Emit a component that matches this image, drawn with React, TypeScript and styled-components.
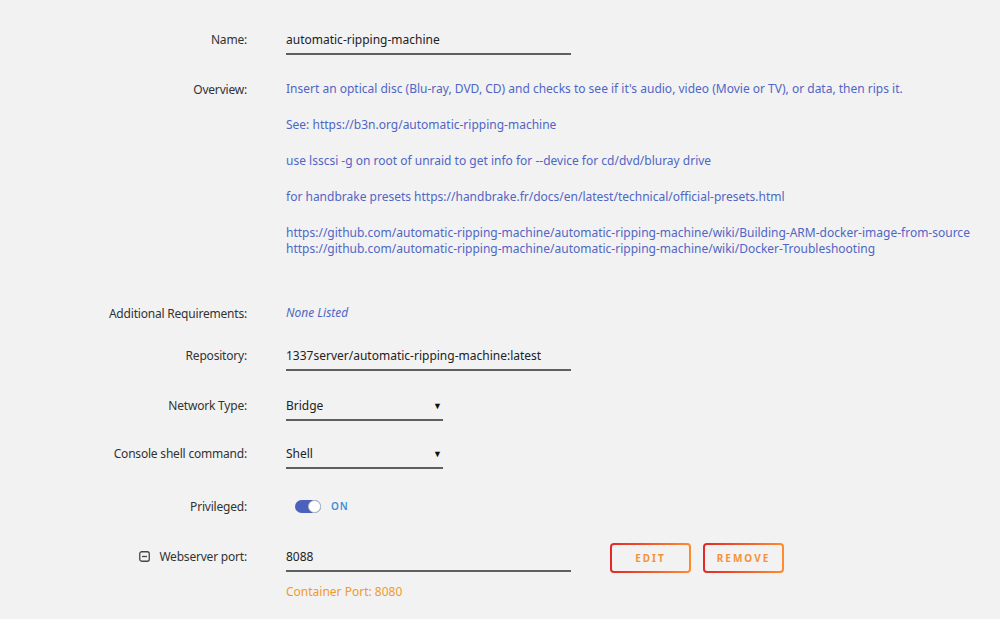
import React from "react";
import styled, { createGlobalStyle } from "styled-components";

const Global = createGlobalStyle`
  html, body { margin: 0; padding: 0; background: #f2f2f2; }
  body { font-family: "Noto Sans", "Open Sans", sans-serif; font-size: 12px; color: #222; }
`;

const Page = styled.div`
  width: 1000px;
  height: 619px;
  overflow: hidden;
  background: #f2f2f2;
  padding-top: 28px;
  box-sizing: border-box;
`;

const Field = styled.div<{ $mt?: number }>`
  display: grid;
  grid-template-columns: 247px 1fr;
  column-gap: 39px;
  align-items: start;
  margin-top: ${(p) => p.$mt ?? 0}px;
`;

const Label = styled.div<{ $h?: number }>`
  display: flex;
  justify-content: flex-end;
  align-items: center;
  gap: 9px;
  height: ${(p) => p.$h ?? 16}px;
  color: #333;
  font-size: 12px;
  letter-spacing: -0.2px;
  white-space: nowrap;
`;

const Value = styled.div`
  display: flex;
  flex-direction: column;
`;

const ValueRow = styled.div`
  display: flex;
  align-items: flex-start;
`;

const Input = styled.div<{ $w: number }>`
  width: ${(p) => p.$w}px;
  height: 27px;
  box-sizing: border-box;
  border-bottom: 2px solid #5f5f5f;
  padding-bottom: 2px;
  display: flex;
  align-items: center;
  justify-content: space-between;
  color: #222;
  font-size: 12px;
  line-height: 16px;
`;

const Caret = styled.span`
  font-size: 9px;
  color: #111;
  margin-right: 1px;
`;

const Overview = styled.div`
  color: #5066c4;
  font-size: 12px;
  line-height: 16px;
  display: flex;
  flex-direction: column;
  gap: 20px;
`;

const Para = styled.div`
  white-space: nowrap;
`;

const Plain = styled.div<{ $italic?: boolean }>`
  color: #5066c4;
  font-style: ${(p) => (p.$italic ? "italic" : "normal")};
  font-size: 12px;
  height: 16px;
  line-height: 16px;
`;

const Toggle = styled.div`
  display: flex;
  align-items: center;
  gap: 10px;
  height: 16px;
  padding-left: 9px;
`;

const Track = styled.div`
  position: relative;
  width: 26px;
  height: 13px;
  border-radius: 7px;
  background: #4c61bd;
  box-sizing: border-box;
`;

const Knob = styled.div`
  position: absolute;
  right: 0;
  top: 0;
  width: 13px;
  height: 13px;
  border-radius: 50%;
  background: #fff;
  box-sizing: border-box;
  border: 1px solid #bdbdbd;
`;

const OnText = styled.span`
  color: #3c8fd6;
  font-size: 10px;
  font-weight: 600;
  letter-spacing: 1px;
`;

const Button = styled.button<{ $w: number }>`
  width: ${(p) => p.$w}px;
  height: 30px;
  box-sizing: border-box;
  border: 2px solid transparent;
  border-radius: 4px;
  background:
    linear-gradient(#f2f2f2, #f2f2f2) padding-box,
    linear-gradient(90deg, #e22828, #ff8c2f) border-box;
  font-family: "Noto Sans", sans-serif;
  font-size: 10px;
  font-weight: 700;
  letter-spacing: 2px;
  color: #f5913a;
  padding: 0;
  margin-top: -2px;
  cursor: pointer;
`;

const Buttons = styled.div`
  display: flex;
  gap: 12px;
  margin-left: 39px;
`;

const Hint = styled.div`
  color: #f09a2a;
  font-size: 12px;
  line-height: 16px;
  margin-top: 11px;
`;

const CollapseIcon = () => (
  <svg width="11" height="11" viewBox="0 0 11 11">
    <rect x="0.75" y="0.75" width="9.5" height="9.5" rx="2" fill="none" stroke="#444" strokeWidth="1.3" />
    <line x1="3" y1="5.5" x2="8" y2="5.5" stroke="#444" strokeWidth="1.3" />
  </svg>
);

export default function App() {
  return (
    <Page>
      <Global />
      <Field>
        <Label $h={23}>Name:</Label>
        <Value>
          <Input $w={285}>automatic-ripping-machine</Input>
        </Value>
      </Field>

      <Field $mt={26}>
        <Label>Overview:</Label>
        <Overview>
          <Para>Insert an optical disc (Blu-ray, DVD, CD) and checks to see if it's audio, video (Movie or TV), or data, then rips it.</Para>
          <Para>See: https://b3n.org/automatic-ripping-machine</Para>
          <Para>use lsscsi -g on root of unraid to get info for --device for cd/dvd/bluray drive</Para>
          <Para>for handbrake presets https://handbrake.fr/docs/en/latest/technical/official-presets.html</Para>
          <Para>
            https://github.com/automatic-ripping-machine/automatic-ripping-machine/wiki/Building-ARM-docker-image-from-source
            <br />
            https://github.com/automatic-ripping-machine/automatic-ripping-machine/wiki/Docker-Troubleshooting
          </Para>
        </Overview>
      </Field>

      <Field $mt={48}>
        <Label>Additional Requirements:</Label>
        <Plain $italic>None Listed</Plain>
      </Field>

      <Field $mt={23}>
        <Label $h={23}>Repository:</Label>
        <Input $w={285}>1337server/automatic-ripping-machine:latest</Input>
      </Field>

      <Field $mt={23}>
        <Label $h={23}>Network Type:</Label>
        <Input $w={157}>
          Bridge<Caret>▼</Caret>
        </Input>
      </Field>

      <Field $mt={21}>
        <Label $h={23}>Console shell command:</Label>
        <Input $w={157}>
          Shell<Caret>▼</Caret>
        </Input>
      </Field>

      <Field $mt={29}>
        <Label>Privileged:</Label>
        <Toggle>
          <Track>
            <Knob />
          </Track>
          <OnText>ON</OnText>
        </Toggle>
      </Field>

      <Field $mt={31}>
        <Label $h={23}>
          <CollapseIcon />
          Webserver port:
        </Label>
        <Value>
          <ValueRow>
            <Input $w={285}>8088</Input>
            <Buttons>
              <Button $w={81}>EDIT</Button>
              <Button $w={81}>REMOVE</Button>
            </Buttons>
          </ValueRow>
          <Hint>Container Port: 8080</Hint>
        </Value>
      </Field>
    </Page>
  );
}
